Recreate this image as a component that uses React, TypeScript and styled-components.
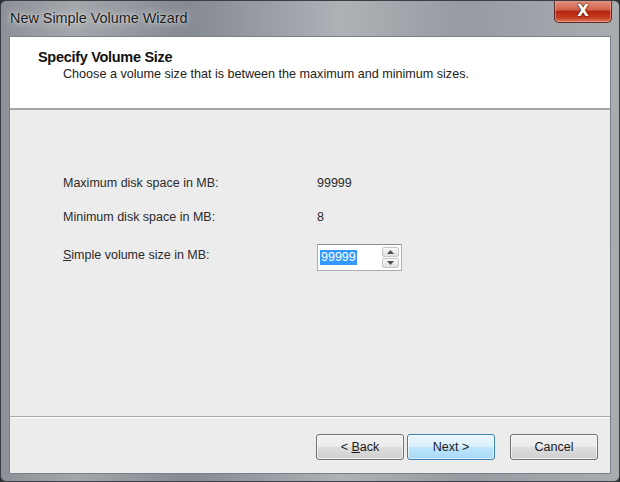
import styled, { createGlobalStyle } from "styled-components";

const GlobalStyle = createGlobalStyle`
  html, body {
    margin: 0;
    padding: 0;
    background: #2b2e33;
  }
  * {
    box-sizing: border-box;
  }
`;

const Window = styled.div`
  width: 620px;
  height: 482px;
  display: flex;
  flex-direction: column;
  border: 1px solid #3b3f45;
  border-radius: 6px;
  background: linear-gradient(
    90deg,
    #8c9096 0%,
    #a4a8ad 12%,
    #858990 30%,
    #aeb1b6 55%,
    #979ba1 75%,
    #a9acb1 100%
  );
  font-family: "Liberation Sans", Arial, sans-serif;
  overflow: hidden;
`;

const TitleBar = styled.div`
  height: 35px;
  display: flex;
  align-items: flex-start;
  justify-content: space-between;
  padding-left: 9px;
  flex-shrink: 0;
`;

const TitleText = styled.span`
  margin-top: 9px;
  font-size: 14.4px;
  color: #1a1a1a;
  text-shadow: 0 0 8px rgba(255, 255, 255, 0.8), 0 0 2px rgba(255, 255, 255, 0.7);
`;

const CloseButton = styled.div`
  width: 58px;
  height: 23px;
  margin-right: 7px;
  margin-top: -1px;
  border: 1px solid #5a2a24;
  border-top: none;
  border-radius: 0 0 5px 5px;
  background: linear-gradient(180deg, #e39684 0%, #d0604a 45%, #b52612 52%, #c63a22 80%, #e07a5a 100%);
  box-shadow: inset 0 0 0 1px rgba(255, 200, 190, 0.45);
  display: flex;
  align-items: center;
  justify-content: center;
  color: #ffffff;
  font-family: "DejaVu Sans", sans-serif;
  font-weight: bold;
  font-size: 15px;
  text-shadow: 0 0 2px #3a0d05, 0 0 1px #3a0d05;
`;

const Client = styled.div`
  flex: 1;
  margin: 0 8px 7px 8px;
  border: 1px solid #7c8087;
  display: flex;
  flex-direction: column;
  background: #ececec;
`;

const Header = styled.div`
  height: 73px;
  background: #ffffff;
  border-bottom: 2px solid #a7a7a7;
  padding: 12px 0 0 28px;
  flex-shrink: 0;
`;

const HeaderTitle = styled.div`
  font-size: 14.5px;
  font-weight: bold;
  color: #111;
  letter-spacing: -0.3px;
`;

const HeaderSubtitle = styled.div`
  margin: 2px 0 0 25px;
  font-size: 12.6px;
  color: #222;
`;

const Body = styled.div`
  flex: 1;
  padding: 66px 0 0 53px;
`;

const Fields = styled.div`
  display: grid;
  grid-template-columns: 254px auto;
  row-gap: 20px;
  align-items: start;
  font-size: 12.5px;
  color: #2a2a2a;
`;

const Label = styled.div<{ $offset?: number }>`
  line-height: 14px;
  margin-top: ${(p) => p.$offset ?? 0}px;
`;

const Value = styled.div`
  line-height: 14px;
`;

const Spinner = styled.div`
  width: 85px;
  height: 27px;
  border: 1px solid #abadb3;
  border-top-color: #8e9097;
  background: #ffffff;
  display: flex;
  align-items: stretch;
  padding: 2px;
`;

const SpinText = styled.div`
  flex: 1;
  display: flex;
  align-items: center;
`;

const Selected = styled.span`
  background: #3399ff;
  color: #ffffff;
  font-size: 12.5px;
  line-height: 15px;
  padding: 0 1px;
`;

const SpinButtons = styled.div`
  width: 17px;
  display: flex;
  flex-direction: column;
  gap: 1px;
`;

const SpinButton = styled.div`
  flex: 1;
  border: 1px solid #c4c6ca;
  border-radius: 2px;
  background: linear-gradient(180deg, #fbfbfb 0%, #ececec 50%, #e0e0e0 100%);
  display: flex;
  align-items: center;
  justify-content: center;
`;

const Footer = styled.div`
  height: 57px;
  border-top: 1px solid #a7a7a7;
  box-shadow: inset 0 1px 0 #ffffff;
  display: flex;
  justify-content: flex-end;
  align-items: flex-start;
  padding: 17px 12px 0 0;
  flex-shrink: 0;
`;

const Button = styled.div<{ $default?: boolean; $gap?: number }>`
  width: 88px;
  height: 26px;
  margin-left: ${(p) => p.$gap ?? 0}px;
  border: 1px solid ${(p) => (p.$default ? "#3c7fb1" : "#707070")};
  border-radius: 3px;
  background: ${(p) =>
    p.$default
      ? "linear-gradient(180deg, #eaf6fd 0%, #d9f0fc 48%, #bee6fd 52%, #a7d9f5 100%)"
      : "linear-gradient(180deg, #f2f2f2 0%, #ebebeb 48%, #dddddd 52%, #cfcfcf 100%)"};
  box-shadow: inset 0 0 0 1px rgba(255, 255, 255, 0.65);
  display: flex;
  align-items: center;
  justify-content: center;
  font-size: 12.5px;
  color: #1a1a1a;
`;

const Arrow = ({ up }: { up?: boolean }) => (
  <svg width="7" height="4" viewBox="0 0 7 4">
    <path d={up ? "M0 4 L3.5 0 L7 4 Z" : "M0 0 L3.5 4 L7 0 Z"} fill="#4d4d4d" />
  </svg>
);

const App = () => {
  return (
    <>
      <GlobalStyle />
      <Window>
        <TitleBar>
          <TitleText>New Simple Volume Wizard</TitleText>
          <CloseButton>X</CloseButton>
        </TitleBar>
        <Client>
          <Header>
            <HeaderTitle>Specify Volume Size</HeaderTitle>
            <HeaderSubtitle>
              Choose a volume size that is between the maximum and minimum sizes.
            </HeaderSubtitle>
          </Header>
          <Body>
            <Fields>
              <Label>Maximum disk space in MB:</Label>
              <Value>99999</Value>
              <Label>Minimum disk space in MB:</Label>
              <Value>8</Value>
              <Label $offset={4}>
                <u>S</u>imple volume size in MB:
              </Label>
              <Spinner>
                <SpinText>
                  <Selected>99999</Selected>
                </SpinText>
                <SpinButtons>
                  <SpinButton>
                    <Arrow up />
                  </SpinButton>
                  <SpinButton>
                    <Arrow />
                  </SpinButton>
                </SpinButtons>
              </Spinner>
            </Fields>
          </Body>
          <Footer>
            <Button>
              &lt;&nbsp;<u>B</u>ack
            </Button>
            <Button $default $gap={3}>
              Next &gt;
            </Button>
            <Button $gap={15}>Cancel</Button>
          </Footer>
        </Client>
      </Window>
    </>
  );
};

export default App;
